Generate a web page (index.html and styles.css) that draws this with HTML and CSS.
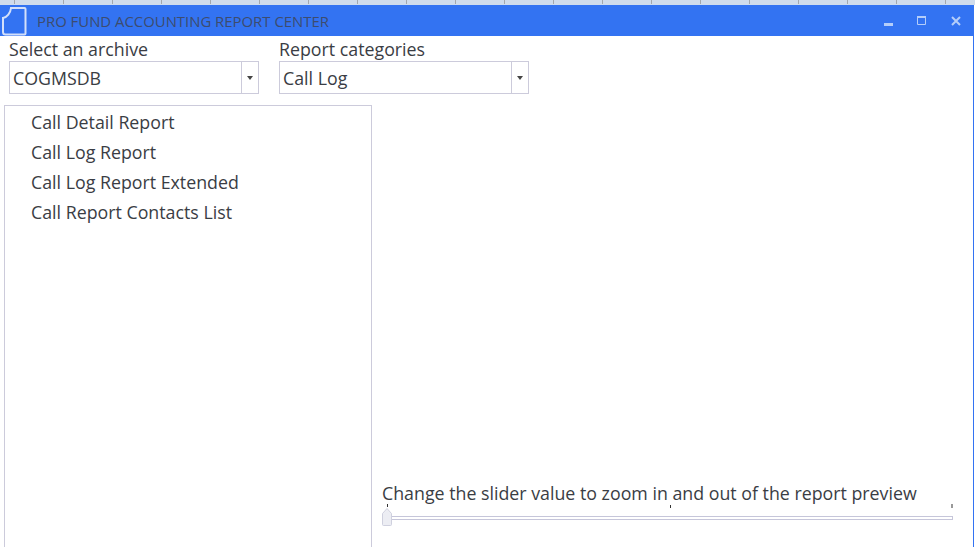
FILE: index.html
```html
<!DOCTYPE html>
<html lang="en">
<head>
    <meta charset="UTF-8">
    <title>Pro Fund Accounting Report Center</title>
    <link rel="stylesheet" href="styles.css">
</head>
<body>
    <div class="ruler"></div>
    <div class="window">
        <div class="titlebar">
            <svg class="app-icon" width="27" height="31" viewBox="0 0 27 31">
                <path d="M11 3 H24.500 a1 1 0 0 1 1 1 V28.500 a1 1 0 0 1 -1 1 H5.500 a2.500 2.500 0 0 1 -2.500 -2.500 V13 C7 12.500 10.500 8 11 3 Z" fill="none" stroke="#d3e0fa" stroke-width="2"/>
            </svg>
            <span class="title">PRO FUND ACCOUNTING REPORT CENTER</span>
            <div class="win-buttons">
                <svg width="9" height="10" viewBox="0 0 9 10"><rect y="7" width="9" height="3" fill="#b4cdf9"/></svg>
                <svg width="9" height="9" viewBox="0 0 9 9"><path d="M.5 .5 H8.500 V8.500 H.5 Z" fill="none" stroke="#b4cdf9"/><rect width="9" height="2" fill="#b4cdf9"/></svg>
                <svg class="win-close" width="10" height="10" viewBox="0 0 10 10"><path d="M1 1 L9 9 M9 1 L1 9" stroke="#b4cdf9" stroke-width="2"/></svg>
            </div>
        </div>

        <div class="filters">
            <div class="field">
                <label>Select an archive</label>
                <div class="combo"><span class="combo-value">COGMSDB</span><span class="combo-arrow"></span></div>
            </div>
            <div class="field">
                <label>Report categories</label>
                <div class="combo"><span class="combo-value">Call Log</span><span class="combo-arrow"></span></div>
            </div>
        </div>

        <div class="main">
            <ul class="report-list">
                <li>Call Detail Report</li>
                <li>Call Log Report</li>
                <li>Call Log Report Extended</li>
                <li>Call Report Contacts List</li>
            </ul>
            <div class="preview">
                <div class="zoom-label">Change the slider value to zoom in and out of the report preview</div>
                <div class="slider">
                    <span class="tick tick-start"></span>
                    <span class="tick tick-mid"></span>
                    <span class="tick tick-end"></span>
                    <div class="track"></div>
                    <svg class="thumb" width="10" height="18" viewBox="0 0 10 18"><path d="M.5 5.500 L5 .5 L9.500 5.500 V16.500 a1 1 0 0 1 -1 1 H1.500 a1 1 0 0 1 -1 -1 Z" fill="#ecedf3" stroke="#cfd0de"/></svg>
                </div>
            </div>
        </div>
    </div>
</body>
</html>
```

FILE: styles.css
```css
html, body {
    height: 100%;
}

body {
    margin: 0;
    overflow: hidden;
    display: flex;
    flex-direction: column;
    background: #fff;
    color: #3a3d44;
    font-family: "Open Sans", "Noto Sans", sans-serif;
    font-size: 17.8px;
}

.ruler {
    height: 5px;
    background-color: #d0dcec;
    background-image: repeating-linear-gradient(90deg, transparent 0, transparent 14px, #a3a8ae 14px, #a3a8ae 15px, transparent 15px, transparent 49px);
    background-size: 100% 4px;
    background-repeat: no-repeat;
}

.window {
    flex: 1;
    display: flex;
    flex-direction: column;
    min-height: 0;
    border-right: 1px solid #3373f2;
    margin-right: 1px;
}

.titlebar {
    height: 31px;
    display: flex;
    align-items: center;
    background: #3373f2;
    margin-right: -1px;
}

.app-icon {
    flex: none;
    overflow: visible;
}

.title {
    margin-left: 10px;
    color: #3d4c6e;
    font-size: 14.9px;
}

.win-buttons {
    align-self: flex-start;
    margin: 11px 13px 0 auto;
    display: flex;
    align-items: flex-start;
    gap: 24px;
}

.win-close {
    margin-left: 1px;
}

.filters {
    display: flex;
    gap: 20px;
    padding: 2px 0 0 9px;
}

.field label {
    display: block;
    height: 23px;
    line-height: 23px;
}

.combo {
    width: 248px;
    height: 31px;
    display: flex;
    border: 1px solid #cccbdb;
}

.combo-value {
    flex: 1;
    padding-left: 3px;
    line-height: 33px;
}

.combo-arrow {
    width: 16px;
    border-left: 1px solid #cccbdb;
    display: flex;
    align-items: center;
    justify-content: center;
}

.combo-arrow::after {
    content: "";
    border: 3.5px solid transparent;
    border-top: 4px solid #444;
    border-bottom: 0;
}

.main {
    flex: 1;
    min-height: 0;
    display: flex;
    margin-top: 11px;
    padding-left: 4px;
}

.report-list {
    width: 368px;
    margin: 0 0 -10px;
    padding: 1px 0 0 26px;
    box-sizing: border-box;
    list-style: none;
    border: 1px solid #cccbdb;
}

.report-list li {
    height: 30px;
    line-height: 30px;
}

.preview {
    flex: 1;
    display: flex;
    flex-direction: column;
    justify-content: flex-end;
    padding: 0 20px 24px 10px;
}

.zoom-label {
    height: 22px;
    line-height: 22px;
    white-space: nowrap;
}

.slider {
    position: relative;
    height: 19px;
}

.track {
    position: absolute;
    left: 0;
    right: 0;
    top: 12px;
    height: 4px;
    box-sizing: border-box;
    border: 1px solid #c6c6da;
}

.thumb {
    position: absolute;
    left: 0;
    top: 4px;
}

.tick {
    position: absolute;
    top: 0;
    width: 1px;
    height: 3px;
    background: #333;
}

.tick-start {
    left: 5px;
}

.tick-mid {
    left: 288px;
    top: 1px;
}

.tick-end {
    right: 0;
    width: 2px;
    height: 4px;
    background: #999;
}
```
